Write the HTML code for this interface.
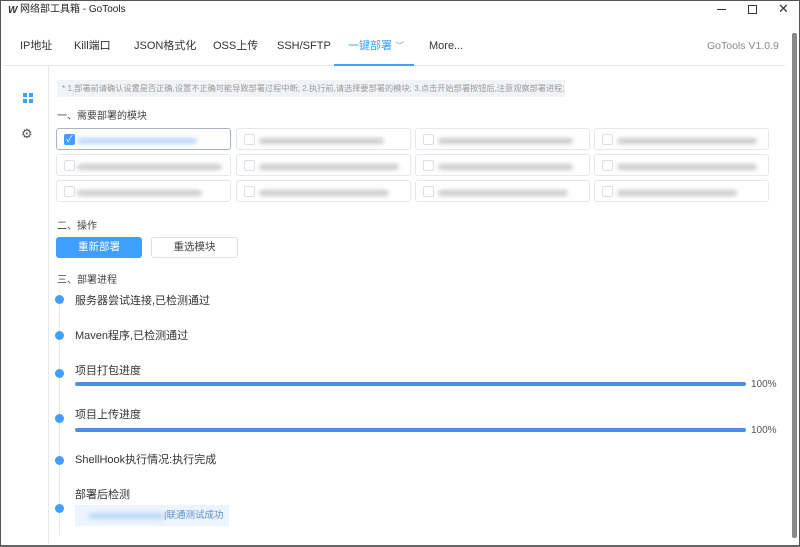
<!DOCTYPE html><html><head><meta charset="utf-8"><style>
*{box-sizing:border-box;margin:0;padding:0}
body{width:800px;height:547px;overflow:hidden;background:#fff;font-family:"Liberation Sans","Noto Sans CJK SC",sans-serif;color:#333;position:relative;font-size:12px;line-height:14px}
.a{position:absolute;white-space:nowrap}
.blur{position:absolute;height:6px;background:#ccc;filter:blur(2px);border-radius:3px}
.cell{position:absolute;width:175px;height:22px;border:1px solid #e4e7ed;border-radius:3px}
.cb{position:absolute;left:7px;top:5px;width:11px;height:11px;border:1px solid #dcdfe6;border-radius:2px;background:#fff}
.dot{position:absolute;left:55px;width:9px;height:9px;border-radius:50%;background:#409eff}
.t{position:absolute;left:75px;font-size:11px;color:#333;line-height:14px;white-space:nowrap}
.bar{position:absolute;left:75px;width:671px;height:4px;border-radius:2px;background:#4a90e2}
.pc{position:absolute;left:751px;font-size:10px;color:#555}
.tab{position:absolute;top:39px;font-size:11px;line-height:14px;color:#333;white-space:nowrap}
</style></head><body>
<div class="a" style="left:0;top:0;width:800px;height:547px;border:1px solid #555;border-bottom:2px solid #666"></div>
<div class="a" style="left:8px;top:4px;font-size:10px;font-weight:bold;font-style:italic">W</div>
<div class="a" style="left:20px;top:3px;font-size:10px;color:#222">网络部工具箱 - GoTools</div>
<div class="a" style="left:717px;top:9px;width:9px;height:1px;background:#333"></div>
<div class="a" style="left:748px;top:5px;width:9px;height:9px;border:1px solid #333"></div>
<div class="a" style="left:778px;top:2px;font-size:13px;color:#333">✕</div>
<div class="tab" style="left:20px">IP地址</div>
<div class="tab" style="left:74px">Kill端口</div>
<div class="tab" style="left:134px">JSON格式化</div>
<div class="tab" style="left:213px">OSS上传</div>
<div class="tab" style="left:277px">SSH/SFTP</div>
<div class="tab" style="left:348px;color:#409eff">一键部署 <span style="font-size:9px;color:#999">﹀</span></div>
<div class="tab" style="left:429px">More...</div>
<div class="tab" style="left:707px;font-size:10.5px;color:#888">GoTools V1.0.9</div>
<div class="a" style="left:3px;top:65px;width:782px;height:1px;background:#e4e7ed"></div>
<div class="a" style="left:334px;top:64px;width:80px;height:2px;background:#409eff"></div>
<div class="a" style="left:792px;top:33px;width:5px;height:505px;background:#888;border-radius:2px"></div>
<div class="a" style="left:48px;top:66px;width:1px;height:478px;background:#e4e7ed"></div>
<svg class="a" style="left:23px;top:93px" width="10" height="10"><rect x="0" y="0" width="4" height="4" fill="#409eff"/><rect x="6" y="0" width="4" height="4" fill="#409eff"/><rect x="0" y="6" width="4" height="4" fill="#409eff"/><rect x="6" y="6" width="4" height="4" fill="#409eff"/></svg>
<div class="a" style="left:21px;top:127px;font-size:13px;color:#555">⚙</div>
<div class="a" style="left:57px;top:80px;width:508px;height:17px;background:#f2f3f5;font-size:8.2px;color:#999;padding:2px 5px;overflow:hidden;line-height:13px">* 1.部署前请确认设置是否正确,设置不正确可能导致部署过程中断; 2.执行前,请选择要部署的模块; 3.点击开始部署按钮后,注意观察部署进程;</div>
<div class="a" style="left:57px;top:110px;font-size:10px;color:#444">一、需要部署的模块</div>
<div class="cell" style="left:56px;top:128px;border-color:#aab4c0"><div class="cb" style="background:#409eff;border-color:#409eff;color:#fff;font-size:9px;line-height:9px;text-align:center">✓</div><div class="blur" style="left:20px;top:9px;width:120px;background:#bcd8f8"></div></div>
<div class="cell" style="left:236px;top:128px"><div class="cb"></div><div class="blur" style="left:22px;top:9px;width:125px"></div></div>
<div class="cell" style="left:415px;top:128px"><div class="cb"></div><div class="blur" style="left:22px;top:9px;width:135px"></div></div>
<div class="cell" style="left:594px;top:128px"><div class="cb"></div><div class="blur" style="left:22px;top:9px;width:140px"></div></div>
<div class="cell" style="left:56px;top:154px"><div class="cb"></div><div class="blur" style="left:20px;top:9px;width:145px"></div></div>
<div class="cell" style="left:236px;top:154px"><div class="cb"></div><div class="blur" style="left:22px;top:9px;width:140px"></div></div>
<div class="cell" style="left:415px;top:154px"><div class="cb"></div><div class="blur" style="left:22px;top:9px;width:135px"></div></div>
<div class="cell" style="left:594px;top:154px"><div class="cb"></div><div class="blur" style="left:22px;top:9px;width:140px"></div></div>
<div class="cell" style="left:56px;top:180px"><div class="cb"></div><div class="blur" style="left:20px;top:9px;width:125px"></div></div>
<div class="cell" style="left:236px;top:180px"><div class="cb"></div><div class="blur" style="left:22px;top:9px;width:130px"></div></div>
<div class="cell" style="left:415px;top:180px"><div class="cb"></div><div class="blur" style="left:22px;top:9px;width:130px"></div></div>
<div class="cell" style="left:594px;top:180px"><div class="cb"></div><div class="blur" style="left:22px;top:9px;width:120px"></div></div>
<div class="a" style="left:57px;top:220px;font-size:10px;color:#444">二、操作</div>
<div class="a" style="left:56px;top:237px;width:86px;height:21px;background:#409eff;border-radius:3px;color:#fff;font-size:10.5px;text-align:center;line-height:21px">重新部署</div>
<div class="a" style="left:151px;top:237px;width:87px;height:21px;border:1px solid #dcdfe6;border-radius:3px;color:#444;font-size:10.5px;text-align:center;line-height:19px">重选模块</div>
<div class="a" style="left:57px;top:274px;font-size:10px;color:#444">三、部署进程</div>
<div class="a" style="left:59px;top:290px;width:1px;height:245px;background:#e4e7ed"></div>
<div class="dot" style="top:295px"></div><div class="t" style="top:294px">服务器尝试连接,已检测通过</div>
<div class="dot" style="top:331px"></div><div class="t" style="top:329px">Maven程序,已检测通过</div>
<div class="dot" style="top:369px"></div><div class="t" style="top:364px">项目打包进度</div>
<div class="bar" style="top:382px"></div><div class="pc" style="top:378px">100%</div>
<div class="dot" style="top:414px"></div><div class="t" style="top:408px">项目上传进度</div>
<div class="bar" style="top:428px"></div><div class="pc" style="top:424px">100%</div>
<div class="dot" style="top:456px"></div><div class="t" style="top:453px">ShellHook执行情况:执行完成</div>
<div class="dot" style="top:504px"></div><div class="t" style="top:488px">部署后检测</div>
<div class="a" style="left:75px;top:505px;width:154px;height:21px;background:#ecf4fd"><div class="blur" style="left:14px;top:8px;width:75px;background:#bcd8f8"></div><span class="a" style="left:89px;top:4px;font-size:9.5px;color:#5a8fd0">|联通测试成功</span></div>
</body></html>
